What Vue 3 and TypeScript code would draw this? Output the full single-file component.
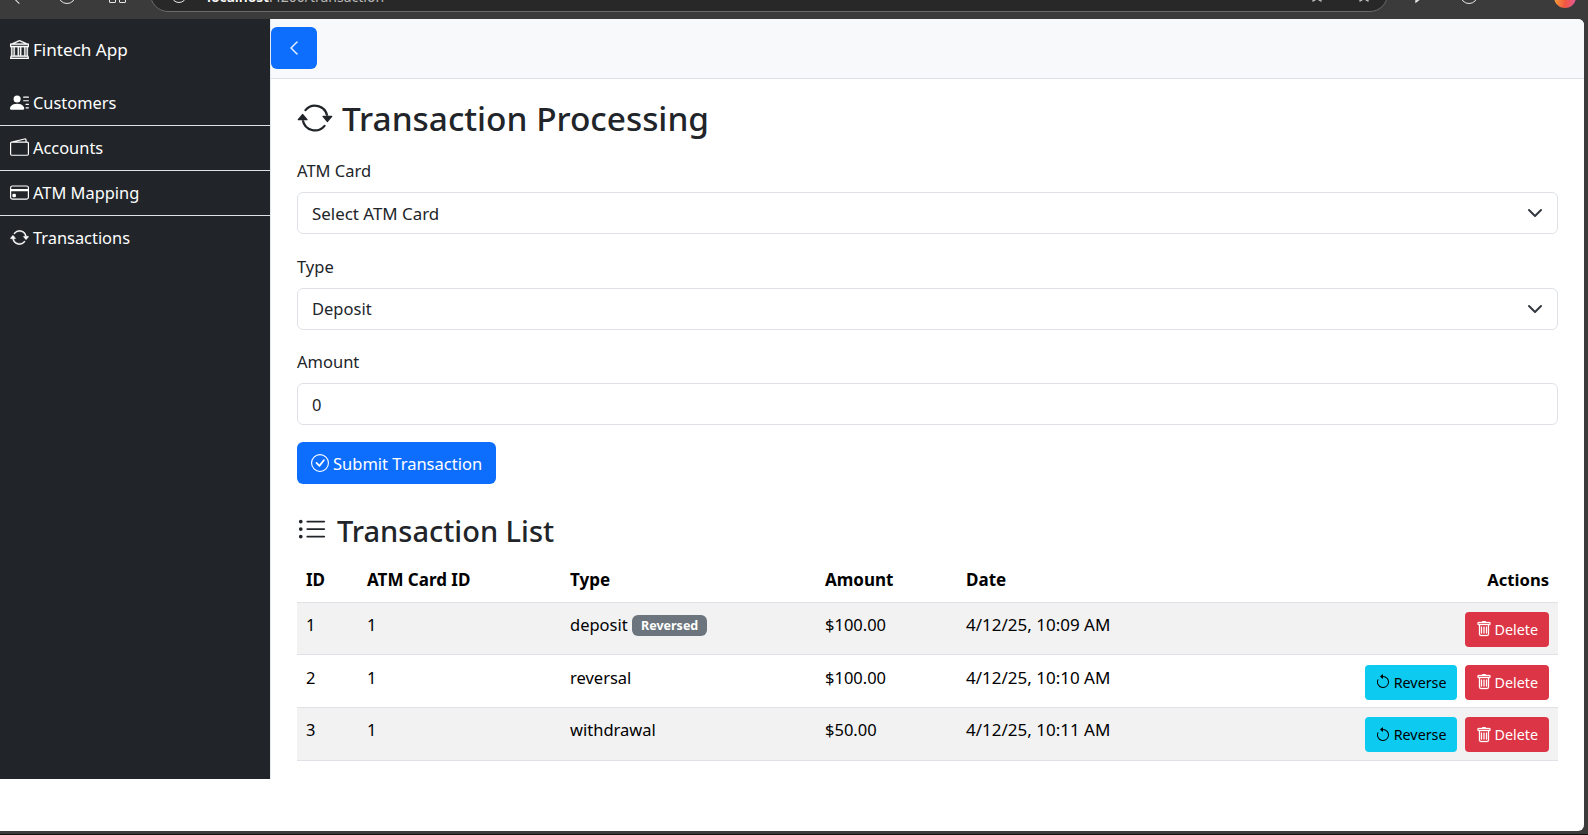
<script setup lang="ts">
interface Txn {
  id: number
  cardId: number
  type: string
  amount: string
  date: string
  reversed: boolean
}

const navItems = [
  { label: 'Customers', icon: 'customers' },
  { label: 'Accounts', icon: 'accounts' },
  { label: 'ATM Mapping', icon: 'card' },
  { label: 'Transactions', icon: 'sync' }
]

const transactions: Txn[] = [
  { id: 1, cardId: 1, type: 'deposit', amount: '$100.00', date: '4/12/25, 10:09 AM', reversed: true },
  { id: 2, cardId: 1, type: 'reversal', amount: '$100.00', date: '4/12/25, 10:10 AM', reversed: false },
  { id: 3, cardId: 1, type: 'withdrawal', amount: '$50.00', date: '4/12/25, 10:11 AM', reversed: false }
]

const syncA = 'M11.534 7h3.932a.25.25 0 0 1 .192.41l-1.966 2.36a.25.25 0 0 1-.384 0l-1.966-2.36a.25.25 0 0 1 .192-.41zm-11 2h3.932a.25.25 0 0 0 .192-.41L2.692 6.23a.25.25 0 0 0-.384 0L.342 8.59A.25.25 0 0 0 .534 9z'
const syncB = 'M8 3c-1.552 0-2.94.707-3.857 1.818a.5.5 0 1 1-.771-.636A6.002 6.002 0 0 1 13.917 7H12.9A5.002 5.002 0 0 0 8 3zM3.1 9a5.002 5.002 0 0 0 8.757 2.182.5.5 0 1 1 .771.636A6.002 6.002 0 0 1 2.083 9H3.1z'
const trashA = 'M5.5 5.5A.5.5 0 0 1 6 6v6a.5.5 0 0 1-1 0V6a.5.5 0 0 1 .5-.5zm2.5 0a.5.5 0 0 1 .5.5v6a.5.5 0 0 1-1 0V6a.5.5 0 0 1 .5-.5zm3 .5a.5.5 0 0 0-1 0v6a.5.5 0 0 0 1 0V6z'
const trashB = 'M14.5 3a1 1 0 0 1-1 1H13v9a2 2 0 0 1-2 2H5a2 2 0 0 1-2-2V4h-.5a1 1 0 0 1-1-1V2a1 1 0 0 1 1-1H6a1 1 0 0 1 1-1h2a1 1 0 0 1 1 1h3.5a1 1 0 0 1 1 1v1zM4.118 4 4 4.059V13a1 1 0 0 0 1 1h6a1 1 0 0 0 1-1V4.059L11.882 4H4.118zM2.5 3V2h11v1h-11z'
const rotateA = 'M8 3a5 5 0 1 1-4.546 2.914.5.5 0 0 0-.908-.417A6 6 0 1 0 8 2v1z'
const rotateB = 'M8 4.466V.534a.25.25 0 0 0-.41-.192L5.23 2.308a.25.25 0 0 0 0 .384l2.36 1.966A.25.25 0 0 0 8 4.466z'
const star = 'M8 1.5l2 4.4 4.8.5-3.6 3.2 1 4.7L8 11.9l-4.2 2.4 1-4.7L1.2 6.4 6 5.9z'
</script>

<template>
  <div class="screen">
    <div class="browser-bar">
      <span class="bar-icon bar-back"></span>
      <span class="bar-icon bar-circle"></span>
      <span class="bar-icon bar-square bar-square-first"></span>
      <span class="bar-icon bar-square"></span>
      <div class="url-pill">
        <span class="url-info"></span>
        <span class="url-text"><b>localhost</b>:4200/transaction</span>
        <svg class="url-star url-star-first" viewBox="0 0 16 16" fill="none" stroke="#d8d8d8" stroke-width="1">
          <path :d="star" />
        </svg>
        <svg class="url-star" viewBox="0 0 16 16" fill="none" stroke="#d8d8d8" stroke-width="1">
          <path :d="star" />
        </svg>
      </div>
      <svg class="bar-chat" viewBox="0 0 22 16" fill="none" stroke="#f0f0f0" stroke-width="1.3">
        <path d="M3 3h16v7H8l-5 4z" />
      </svg>
      <span class="bar-icon bar-circle bar-help"></span>
      <span class="bar-avatar"></span>
    </div>

    <div class="window">
      <aside class="sidebar">
        <div class="brand">
          <svg class="nav-icon" viewBox="0 0 16 16" fill="currentColor" stroke="currentColor" stroke-width=".25">
            <path d="m8 0 6.61 3h.89a.5.5 0 0 1 .5.5v2a.5.5 0 0 1-.5.5H15v7a.5.5 0 0 1 .485.38l.5 2a.498.498 0 0 1-.485.62H.5a.498.498 0 0 1-.485-.62l.5-2A.501.501 0 0 1 1 13V6H.5a.5.5 0 0 1-.5-.5v-2A.5.5 0 0 1 .5 3h.89L8 0ZM3.777 3h8.447L8 1 3.777 3ZM2 6v7h1V6H2Zm2 0v7h2.5V6H4Zm3.5 0v7h1V6h-1Zm2 0v7H12V6H9.5ZM13 6v7h1V6h-1Zm2-1V4H1v1h14Zm-.39 9H1.39l-.25 1h13.72l-.25-1Z" />
          </svg>
          <span>Fintech App</span>
        </div>
        <ul class="nav-list">
          <li v-for="item in navItems" :key="item.label" class="nav-item">
            <svg v-if="item.icon === 'customers'" class="nav-icon" viewBox="0 0 16 16" fill="currentColor">
              <path d="M6 8a3 3 0 1 0 0-6 3 3 0 0 0 0 6Zm-5 6s-1 0-1-1 1-4 6-4 6 3 6 4-1 1-1 1H1ZM11 3.5a.5.5 0 0 1 .5-.5h4a.5.5 0 0 1 0 1h-4a.5.5 0 0 1-.5-.5Zm.5 2.5a.5.5 0 0 0 0 1h4a.5.5 0 0 0 0-1h-4Zm2 3a.5.5 0 0 0 0 1h2a.5.5 0 0 0 0-1h-2Zm0 3a.5.5 0 0 0 0 1h2a.5.5 0 0 0 0-1h-2Z" />
            </svg>
            <svg v-else-if="item.icon === 'accounts'" class="nav-icon" viewBox="0 0 16 16" fill="currentColor">
              <path d="M12.136.326A1.5 1.5 0 0 1 14 1.78V3h.5A1.5 1.5 0 0 1 16 4.5v9a1.5 1.5 0 0 1-1.5 1.5h-13A1.5 1.5 0 0 1 0 13.5v-9a1.5 1.5 0 0 1 1.432-1.499L12.136.326zM5.562 3H13V1.78a.5.5 0 0 0-.621-.484L5.562 3zM1.5 4a.5.5 0 0 0-.5.5v9a.5.5 0 0 0 .5.5h13a.5.5 0 0 0 .5-.5v-9a.5.5 0 0 0-.5-.5h-13z" />
            </svg>
            <svg v-else-if="item.icon === 'card'" class="nav-icon" viewBox="0 0 16 16" fill="currentColor">
              <path d="M0 4a2 2 0 0 1 2-2h12a2 2 0 0 1 2 2v8a2 2 0 0 1-2 2H2a2 2 0 0 1-2-2V4zm2-1a1 1 0 0 0-1 1v1h14V4a1 1 0 0 0-1-1H2zm13 4H1v5a1 1 0 0 0 1 1h12a1 1 0 0 0 1-1V7z" />
              <path d="M2 10a1 1 0 0 1 1-1h1a1 1 0 0 1 1 1v1a1 1 0 0 1-1 1H3a1 1 0 0 1-1-1v-1z" />
            </svg>
            <svg v-else class="nav-icon" viewBox="0 0 16 16" fill="currentColor" stroke="currentColor" stroke-width=".3">
              <path :d="syncA" />
              <path fill-rule="evenodd" :d="syncB" />
            </svg>
            <span>{{ item.label }}</span>
          </li>
        </ul>
      </aside>

      <main class="main">
        <header class="topbar">
          <button class="toggle-btn" type="button" aria-label="Toggle sidebar">
            <svg viewBox="0 0 16 16" fill="currentColor" stroke="currentColor" stroke-width=".5" width="16" height="16">
              <path fill-rule="evenodd" d="M11.354 1.646a.5.5 0 0 1 0 .708L5.707 8l5.647 5.646a.5.5 0 0 1-.708.708l-6-6a.5.5 0 0 1 0-.708l6-6a.5.5 0 0 1 .708 0z" />
            </svg>
          </button>
        </header>

        <section class="content">
          <h2 class="page-title">
            <svg class="title-icon" viewBox="0 0 16 16" fill="currentColor">
              <path :d="syncA" />
              <path fill-rule="evenodd" :d="syncB" />
            </svg>
            <span>Transaction Processing</span>
          </h2>

          <form class="txn-form" @submit.prevent>
            <label class="field-label">ATM Card</label>
            <div class="control select-control">
              <span class="wide-text">Select ATM Card</span>
              <svg class="caret" viewBox="0 0 16 16" fill="none" stroke="#343a40" stroke-width="2" stroke-linecap="round" stroke-linejoin="round">
                <path d="m2 5 6 6 6-6" />
              </svg>
            </div>
            <label class="field-label">Type</label>
            <div class="control select-control">
              <span>Deposit</span>
              <svg class="caret" viewBox="0 0 16 16" fill="none" stroke="#343a40" stroke-width="2" stroke-linecap="round" stroke-linejoin="round">
                <path d="m2 5 6 6 6-6" />
              </svg>
            </div>
            <label class="field-label">Amount</label>
            <div class="control">0</div>
            <button class="submit-btn" type="submit">
              <svg viewBox="0 0 16 16" fill="currentColor" width="18" height="18">
                <path d="M8 15A7 7 0 1 1 8 1a7 7 0 0 1 0 14zm0 1A8 8 0 1 0 8 0a8 8 0 0 0 0 16z" />
                <path d="M10.97 4.97a.235.235 0 0 0-.02.022L7.477 9.417 5.384 7.323a.75.75 0 0 0-1.06 1.06L6.97 11.03a.75.75 0 0 0 1.079-.02l3.992-4.99a.75.75 0 0 0-1.071-1.05z" />
              </svg>
              <span>Submit Transaction</span>
            </button>
          </form>

          <h3 class="list-title">
            <svg class="list-icon" viewBox="0 0 16 16" fill="currentColor">
              <path fill-rule="evenodd" d="M5 11.5a.5.5 0 0 1 .5-.5h9a.5.5 0 0 1 0 1h-9a.5.5 0 0 1-.5-.5zm0-4a.5.5 0 0 1 .5-.5h9a.5.5 0 0 1 0 1h-9a.5.5 0 0 1-.5-.5zm0-4a.5.5 0 0 1 .5-.5h9a.5.5 0 0 1 0 1h-9a.5.5 0 0 1-.5-.5zm-3 1a1 1 0 1 0 0-2 1 1 0 0 0 0 2zm0 4a1 1 0 1 0 0-2 1 1 0 0 0 0 2zm0 4a1 1 0 1 0 0-2 1 1 0 0 0 0 2z" />
            </svg>
            <span>Transaction List</span>
          </h3>

          <table class="txn-table">
            <colgroup>
              <col style="width: 61px" />
              <col style="width: 203px" />
              <col style="width: 255px" />
              <col style="width: 141px" />
              <col />
              <col style="width: 260px" />
            </colgroup>
            <thead>
              <tr>
                <th>ID</th>
                <th>ATM Card ID</th>
                <th>Type</th>
                <th>Amount</th>
                <th>Date</th>
                <th class="right">Actions</th>
              </tr>
            </thead>
            <tbody>
              <tr v-for="t in transactions" :key="t.id">
                <td>{{ t.id }}</td>
                <td>{{ t.cardId }}</td>
                <td>
                  {{ t.type }}
                  <span v-if="t.reversed" class="badge">Reversed</span>
                </td>
                <td>{{ t.amount }}</td>
                <td class="date-cell">{{ t.date }}</td>
                <td class="right">
                  <div class="actions">
                    <button v-if="!t.reversed" class="btn-sm btn-info" type="button">
                      <svg viewBox="0 0 16 16" fill="currentColor" width="16" height="16">
                        <path fill-rule="evenodd" :d="rotateA" />
                        <path :d="rotateB" />
                      </svg>
                      <span>Reverse</span>
                    </button>
                    <button class="btn-sm btn-danger" type="button">
                      <svg viewBox="0 0 16 16" fill="currentColor" stroke="currentColor" stroke-width=".3" width="16" height="16">
                        <path :d="trashA" />
                        <path fill-rule="evenodd" :d="trashB" />
                      </svg>
                      <span>Delete</span>
                    </button>
                  </div>
                </td>
              </tr>
            </tbody>
          </table>
        </section>
      </main>
    </div>
  </div>
</template>

<style>
html,
body {
  margin: 0;
  background: #3a3a3a;
  overflow: hidden;
}
</style>

<style scoped>
.screen {
  display: flex;
  flex-direction: column;
  box-sizing: border-box;
  width: 1588px;
  height: 835px;
  overflow: hidden;
  background: #3b3b3b;
  border-bottom: 1px solid #111;
  font-family: "Noto Sans", "Open Sans", sans-serif;
  font-size: 16.5px;
  color: #212529;
}

.browser-bar {
  display: flex;
  align-items: flex-end;
  flex: none;
  height: 19px;
  overflow: hidden;
}

.bar-icon {
  flex: none;
  display: block;
  box-sizing: border-box;
  border: 1.5px solid #e8e8e8;
}

.bar-back {
  width: 10px;
  height: 10px;
  margin: 0 0 17px 14px;
  border-width: 0 0 1.5px 1.5px;
  transform: rotate(45deg);
}

.bar-circle {
  width: 18px;
  height: 18px;
  margin: 0 0 15px 34px;
  border-radius: 50%;
}

.bar-square {
  width: 7px;
  height: 7px;
  margin: 0 0 16px 3px;
  border-radius: 1px;
}

.bar-square-first {
  margin-left: 33px;
}

.url-pill {
  flex: none;
  display: flex;
  align-items: flex-end;
  box-sizing: border-box;
  width: 1238px;
  height: 36px;
  margin: 0 0 7px 24px;
  padding: 0 15px 8px 20px;
  background: #282828;
  border: 1px solid #6b6b6b;
  border-radius: 18px;
  color: #b8b8b8;
  font-size: 14px;
  line-height: 20px;
}

.url-info {
  flex: none;
  box-sizing: border-box;
  width: 16px;
  height: 16px;
  margin-right: 20px;
  border: 1.5px solid #e8e8e8;
  border-radius: 50%;
}

.url-text {
  margin-bottom: -4px;
}

.url-text b {
  color: #fff;
  font-weight: 600;
}

.url-star {
  flex: none;
  width: 16px;
  height: 16px;
  margin-left: 31px;
}

.url-star-first {
  margin-left: auto;
}

.bar-chat {
  flex: none;
  width: 22px;
  height: 16px;
  margin: 0 0 15px 25px;
}

.bar-help {
  margin-left: 25px;
}

.bar-avatar {
  flex: none;
  width: 22px;
  height: 22px;
  margin: 0 0 11px 76px;
  border-radius: 50%;
  background: linear-gradient(100deg, #f5b13d, #f0563f 55%, #e45aa8);
}

.window {
  display: flex;
  align-items: flex-start;
  flex: none;
  width: 1584px;
  height: 812px;
  overflow: hidden;
  background: #fff;
  border-radius: 0 6px 6px 0;
}

.sidebar {
  flex: none;
  width: 270px;
  height: 760px;
  background: #212529;
  border-right: 1px solid #e3e9ef;
  color: #fff;
}

.brand {
  display: flex;
  align-items: center;
  gap: 4px;
  height: 60px;
  margin-bottom: 2px;
  padding-left: 10px;
  font-size: 17.1px;
}

.nav-list {
  margin: 0;
  padding: 0;
  list-style: none;
}

.nav-item {
  display: flex;
  align-items: center;
  gap: 4px;
  height: 43px;
  padding: 0 0 1px 10px;
  border-bottom: 1px solid #dee2e6;
  font-size: 16.4px;
}

.nav-item:last-child {
  border-bottom: 0;
}

.nav-icon {
  flex: none;
  width: 19px;
  height: 19px;
}

.main {
  flex: 1;
  min-width: 0;
}

.topbar {
  display: flex;
  align-items: flex-start;
  box-sizing: border-box;
  height: 60px;
  padding-top: 8px;
  background: #f8f9fa;
  border-bottom: 1px solid #dee2e6;
}

.toggle-btn {
  display: flex;
  align-items: center;
  justify-content: center;
  width: 46px;
  height: 42px;
  padding: 0;
  border: 0;
  border-radius: 6px;
  background: #0d6efd;
  color: #fff;
}

.content {
  padding: 15px 26px 0 26px;
}

.page-title {
  display: flex;
  align-items: center;
  gap: 9px;
  height: 48px;
  margin: 0 0 17px;
  font-size: 33.4px;
  font-weight: 500;
  line-height: 48px;
}

.title-icon {
  flex: none;
  width: 36px;
  height: 36px;
}

.txn-form {
  display: flex;
  flex-direction: column;
  align-items: stretch;
}

.field-label {
  height: 24px;
  margin-bottom: 9px;
  line-height: 24px;
}

.control {
  display: flex;
  align-items: center;
  justify-content: space-between;
  box-sizing: border-box;
  height: 42px;
  margin-bottom: 20.5px;
  padding: 0 14px;
  border: 1px solid #dee2e6;
  border-radius: 6px;
  background: #fff;
}

.wide-text {
  font-size: 16.9px;
}

.caret {
  width: 16px;
  height: 16px;
}

.submit-btn {
  display: flex;
  align-items: center;
  align-self: flex-start;
  gap: 4px;
  height: 42px;
  margin-top: -3.5px;
  padding: 0 14px;
  border: 0;
  border-radius: 6px;
  background: #0d6efd;
  color: #fff;
  font: inherit;
}

.list-title {
  display: flex;
  align-items: center;
  gap: 10px;
  height: 40px;
  margin: 27px 0 8px;
  font-size: 29px;
  font-weight: 500;
  line-height: 40px;
}

.list-icon {
  flex: none;
  width: 30px;
  height: 30px;
  margin-top: -3px;
}

.txn-table {
  width: 100%;
  border-collapse: collapse;
  table-layout: fixed;
  color: #000;
}

.txn-table th {
  box-sizing: border-box;
  height: 43px;
  padding: 0 9px 2px;
  border-bottom: 1px solid #dee2e6;
  font-size: 17px;
  font-weight: 700;
  text-align: left;
}

.txn-table td {
  box-sizing: border-box;
  height: 52.7px;
  padding: 0 9px 8px;
  border-bottom: 1px solid #dee2e6;
}

.txn-table .date-cell {
  font-size: 17px;
}

.txn-table tbody tr:nth-child(odd) {
  background: #f2f2f2;
}

.txn-table .right {
  text-align: right;
}

.txn-table th.right {
  font-size: 16.6px;
}

.actions {
  display: flex;
  justify-content: flex-end;
  gap: 8px;
  margin-bottom: -10px;
}

.badge {
  display: inline-block;
  padding: 3px 9px;
  border-radius: 6px;
  background: #6c757d;
  color: #fff;
  font-size: 12.5px;
  font-weight: 700;
  line-height: 15px;
  vertical-align: 1px;
}

.btn-sm {
  display: flex;
  align-items: center;
  gap: 3px;
  height: 35px;
  padding: 0 10px;
  border: 0;
  border-radius: 4px;
  font: inherit;
  font-size: 14.3px;
}

.btn-info {
  background: #0dcaf0;
  color: #000;
}

.btn-danger {
  padding: 0 11px;
  background: #dc3545;
  color: #fff;
}
</style>
